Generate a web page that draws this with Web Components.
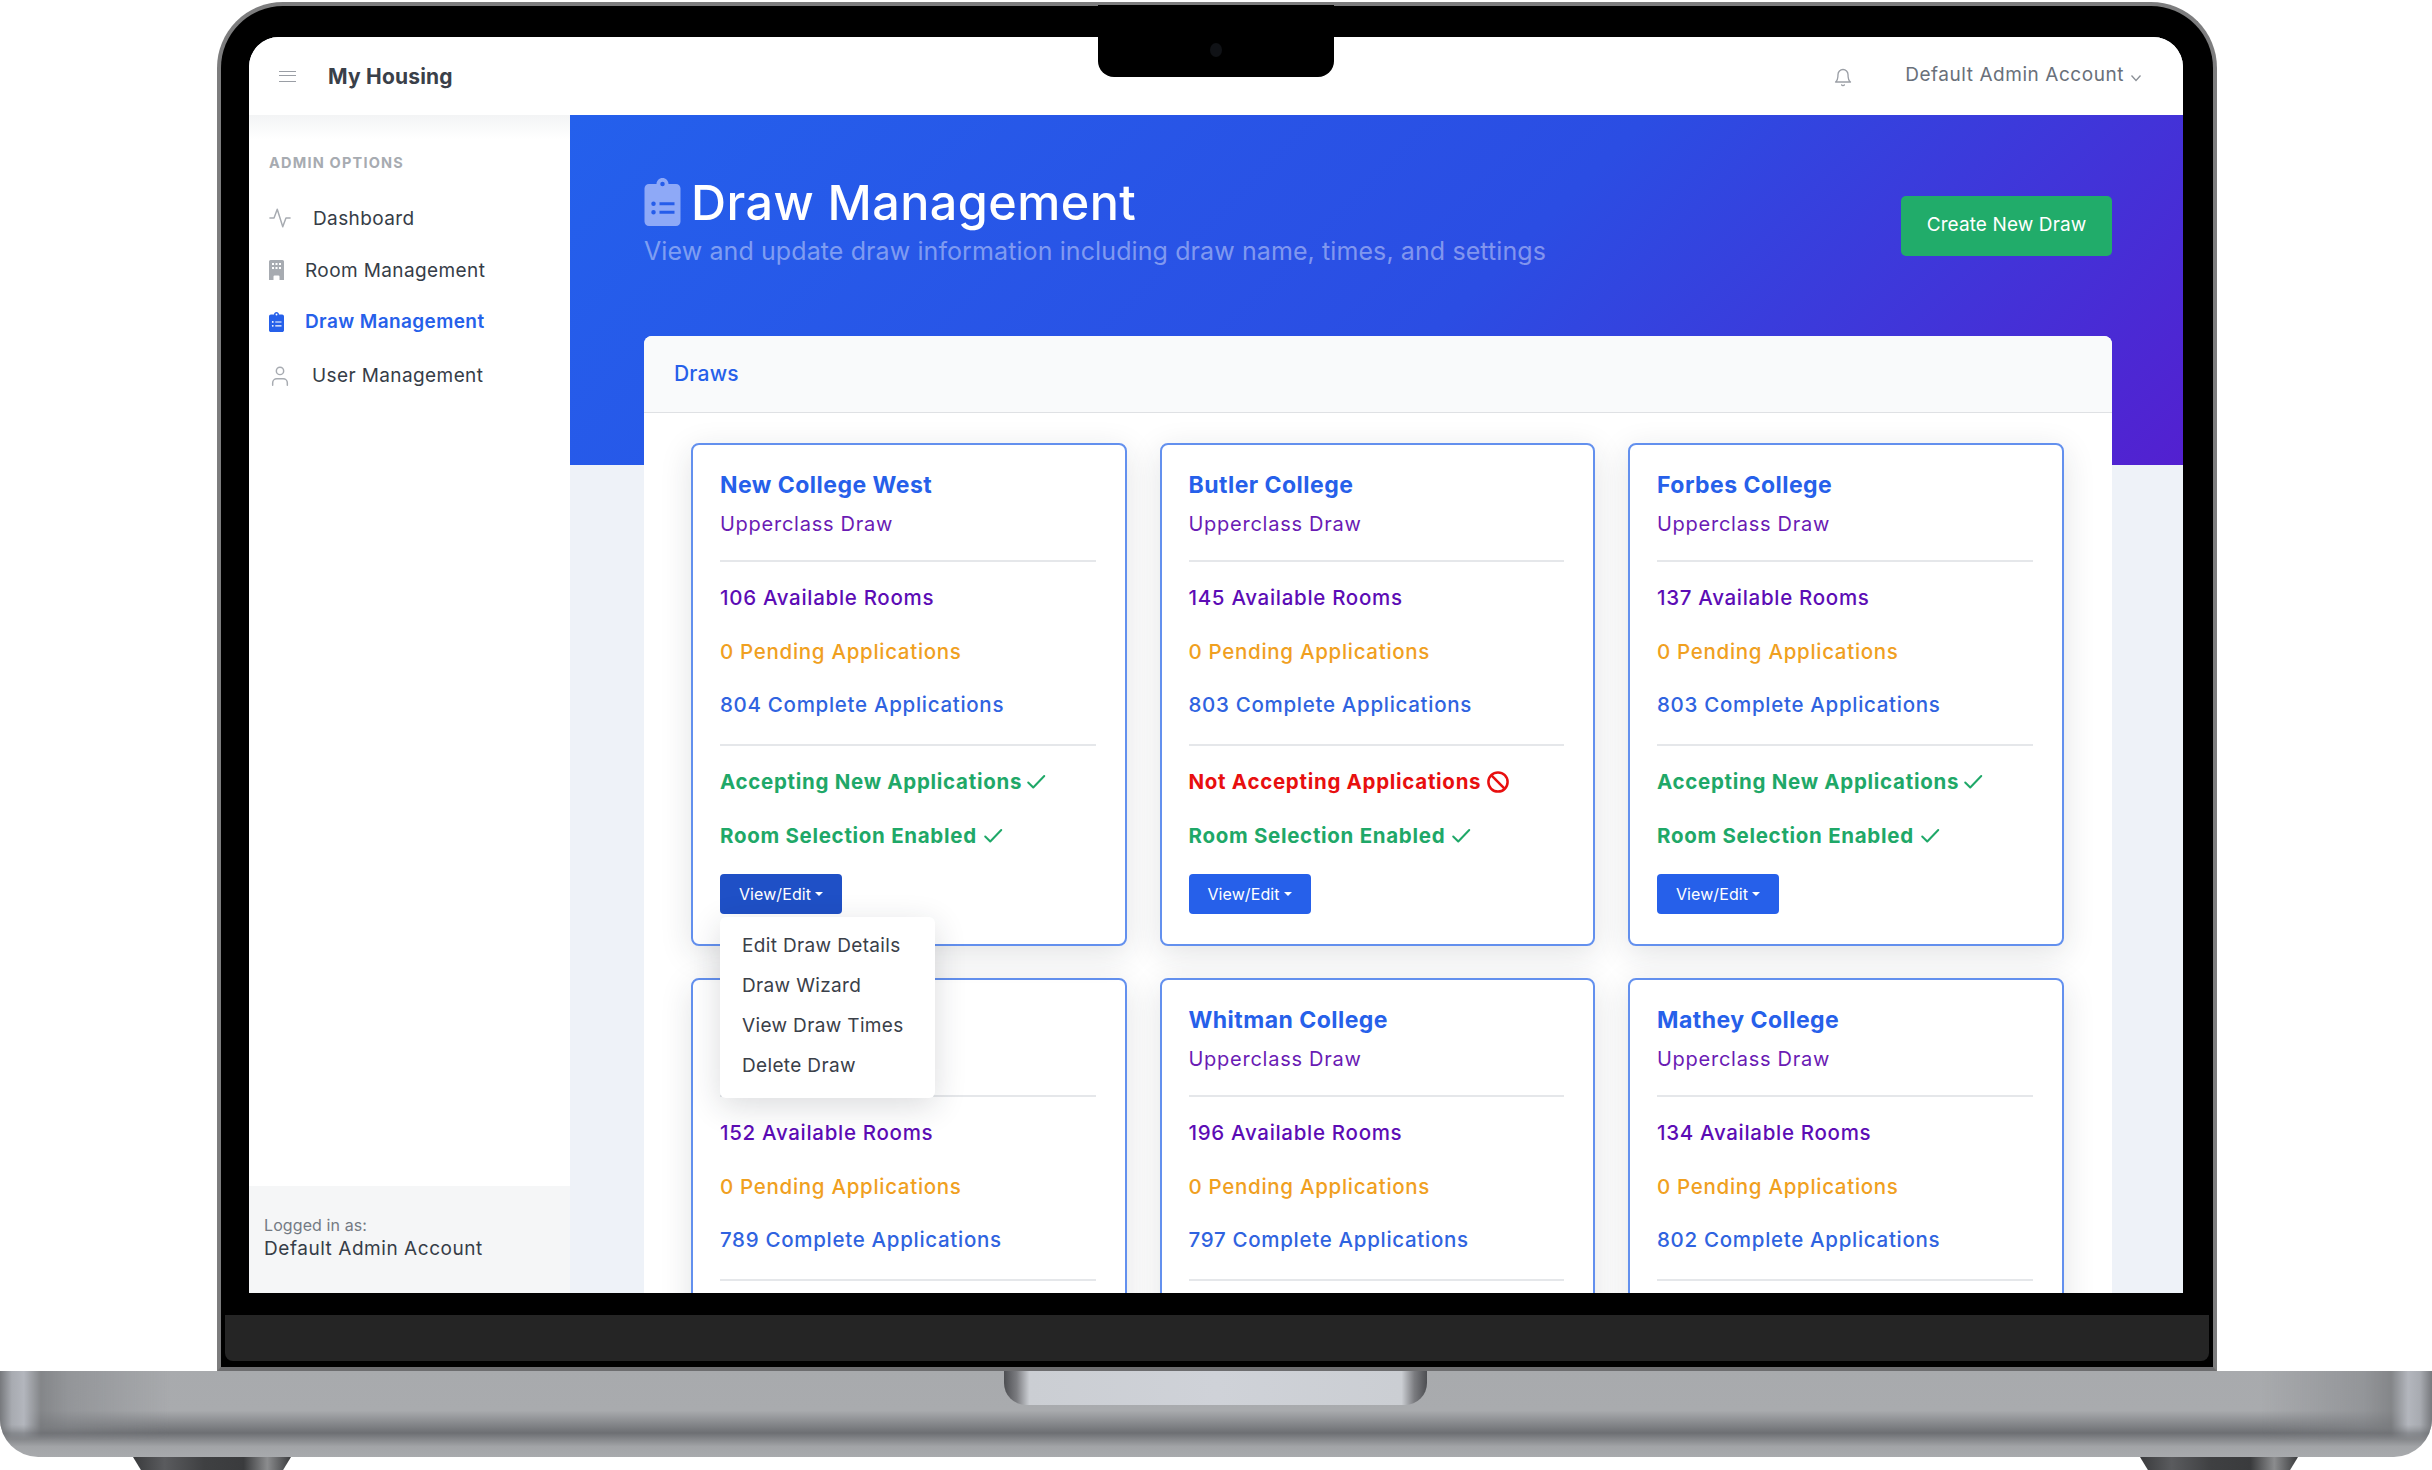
<!DOCTYPE html>
<html>
<head>
<meta charset="utf-8">
<title>My Housing</title>
<style>
html,body{margin:0;padding:0;background:#fff;}
body{width:2432px;height:1470px;overflow:hidden;font-family:Inter,"Liberation Sans",sans-serif;}
</style>
</head>
<body>
<laptop-frame>
  <housing-app>
    <side-nav slot="side">
      <nav-item icon="activity" gap="22" style="height:52px">Dashboard</nav-item>
      <nav-item icon="building" gap="21" style="height:52px">Room Management</nav-item>
      <nav-item icon="clipboard" gap="21" active style="height:51px">Draw Management</nav-item>
      <nav-item icon="user" gap="21" style="height:57px">User Management</nav-item>
    </side-nav>
    <draws-panel slot="main">
      <draw-card raised name="New College West" type="Upperclass Draw" rooms="106" pending="0" complete="804" accepting="yes" pressed>
        <draw-menu slot="menu">
          <span>Edit Draw Details</span><span>Draw Wizard</span><span>View Draw Times</span><span>Delete Draw</span>
        </draw-menu>
      </draw-card>
      <draw-card name="Butler College" type="Upperclass Draw" rooms="145" pending="0" complete="803" accepting="no"></draw-card>
      <draw-card name="Forbes College" type="Upperclass Draw" rooms="137" pending="0" complete="803" accepting="yes"></draw-card>
      <draw-card rooms="152" pending="0" complete="789"></draw-card>
      <draw-card name="Whitman College" type="Upperclass Draw" rooms="196" pending="0" complete="797"></draw-card>
      <draw-card name="Mathey College" type="Upperclass Draw" rooms="134" pending="0" complete="802"></draw-card>
    </draws-panel>
  </housing-app>
</laptop-frame>

<script>
// shared icon paths
const ICONS = {
  activity: '<svg width="22" height="22" viewBox="0 0 24 24" fill="none" stroke="#a7abb1" stroke-width="1.6" stroke-linecap="round" stroke-linejoin="round"><polyline points="23 12 18.5 12 15 21.5 9 2.5 5.5 12 1 12"/></svg>',
  building: '<svg width="15" height="20" viewBox="0 0 15 20" fill="#a7abb1" fill-rule="evenodd"><path d="M1.5 0h12A1.5 1.5 0 0 1 15 1.500V20h-4.500v-3.500a1 1 0 0 0-1-1h-4a1 1 0 0 0-1 1V20H0V1.500A1.500 1.500 0 0 1 1.500 0zM3 3v2h2V3zM6.500 3v2h2V3zM10 3v2h2V3zM3 7v2h2V7zM6.500 7v2h2V7zM10 7v2h2V7z"/></svg>',
  clipboard: '<svg width="15" height="20" viewBox="0 0 384 512" fill="#2660ea" fill-rule="evenodd"><path d="M336 64h-80c0-35.300-28.700-64-64-64s-64 28.700-64 64H48C21.500 64 0 85.500 0 112v352c0 26.500 21.500 48 48 48h288c26.500 0 48-21.500 48-48V112c0-26.500-21.500-48-48-48zM192 40a24 24 0 1 1 0 48a24 24 0 1 1 0-48zM96 230a24 24 0 1 1 0 48a24 24 0 1 1 0-48zM96 330a24 24 0 1 1 0 48a24 24 0 1 1 0-48zM160 240h160v30H160zM160 340h160v30H160z"/></svg>',
  user: '<svg width="22" height="22" viewBox="0 0 24 24" fill="none" stroke="#a7abb1" stroke-width="1.6" stroke-linecap="round" stroke-linejoin="round"><path d="M20 22v-2.500a4.500 4.500 0 0 0-4.500-4.500h-7A4.500 4.500 0 0 0 4 19.500V22"/><circle cx="12" cy="6.500" r="4"/></svg>',
  check: '<svg width="22" height="22" viewBox="0 0 24 24" fill="none" stroke="currentColor" stroke-width="2.200" stroke-linecap="round" stroke-linejoin="round"><polyline points="21 5.500 9 18 3.500 12.500"/></svg>',
  ban: '<svg width="24" height="24" viewBox="0 0 22 22" fill="none" stroke="currentColor" stroke-width="2.300" style="margin-left:2px"><circle cx="11" cy="11" r="8.800"/><line x1="4.800" y1="4.800" x2="17.200" y2="17.200"/></svg>'
};

class LaptopFrame extends HTMLElement{
  constructor(){
    super();
    this.attachShadow({mode:'open'}).innerHTML=`
    <style>
      :host{display:block;width:2432px;height:1470px;}
      .lid{position:relative;box-sizing:border-box;width:2000px;height:1369px;margin:2px 0 0 217px;background:#000;
        border:4px solid #7d7d7e;border-bottom-color:#6d6d6f;border-radius:66px 66px 0 0;padding:31px 30px 0 28px;}
      .screen{height:1256px;border-radius:30px 30px 0 0;overflow:hidden;background:#eef2f8;}
      .notch{position:absolute;left:877px;top:-1px;width:236px;height:72px;background:#000;border-radius:0 0 16px 16px;}
      .cam{position:absolute;left:112px;top:38px;width:12px;height:14px;border-radius:50%;background:#101216;}
      .chin{height:46px;margin:22px -26px 0 -24px;background:#252525;border-radius:0 0 8px 8px;}
      .base{position:relative;height:86px;border-radius:0 0 38px 38px;overflow:hidden;
        background:linear-gradient(#a8aaad 0,#a9abae 46%,#6d6f73 72%,#a2a4a7 88%,#a8aaad 100%);}
      .end{position:absolute;top:0;bottom:0;width:170px;
        -webkit-mask-image:linear-gradient(#000 62%,transparent 80%);mask-image:linear-gradient(#000 62%,transparent 80%);}
      .end.l{left:0;background:linear-gradient(90deg,#77797d 0,#a8abb1 7%,#b3b6bd 14%,rgba(120,122,125,.75) 24%,rgba(130,132,136,.55) 40%,rgba(168,170,173,0) 100%);}
      .end.r{right:0;background:linear-gradient(270deg,#77797d 0,#a8abb1 7%,#b3b6bd 14%,rgba(120,122,125,.75) 24%,rgba(130,132,136,.55) 40%,rgba(168,170,173,0) 100%);}
      .hinge{position:absolute;left:1004px;top:0;width:423px;height:34px;border-radius:0 0 22px 22px;
        background:linear-gradient(90deg,#4d4e52 0,#7b7c80 3%,#cbced3 6%,#cfd2d8 50%,#cbced3 94%,#7b7c80 97%,#4d4e52 100%);}
      .feet{display:flex;justify-content:space-between;height:13px;padding:0 134px 0 133px;}
      .foot{width:158px;height:13px;clip-path:polygon(0 0,100% 0,95% 100%,5% 100%);
        background:linear-gradient(90deg,#3a3b3d,#5a5b5e 20%,#3f4042 45%,#3a3b3d 70%,#8b8c8e 85%,#3a3b3d);}
    </style>
    <div class="lid">
      <div class="screen"><slot></slot></div>
      <div class="notch"><div class="cam"></div></div>
      <div class="chin"></div>
    </div>
    <div class="base"><div class="end l"></div><div class="end r"></div><div class="hinge"></div></div>
    <div class="feet"><div class="foot"></div><div class="foot"></div></div>`;
  }
}

class HousingApp extends HTMLElement{
  constructor(){
    super();
    this.attachShadow({mode:'open'}).innerHTML=`
    <style>
      :host{display:block;height:1256px;color:#363d47;}
      header{display:flex;align-items:center;height:78px;background:#fff;padding:0 41px 0 30px;box-sizing:border-box;}
      .burger{display:block;width:17px;height:11px;margin-top:1px;border-top:1.5px solid #9a9ea5;border-bottom:1.5px solid #9a9ea5;position:relative;box-sizing:border-box;}
      .burger::after{content:"";position:absolute;left:0;right:0;top:3.200px;border-top:1.5px solid #9a9ea5;}
      .brand{margin-left:32px;font-size:21px;font-weight:700;letter-spacing:.2px;color:#3a4049;}
      .user{margin-left:auto;display:flex;align-items:center;color:#69707a;font-size:19px;letter-spacing:.55px;padding-bottom:3px;}
      .bell{margin-right:52px;margin-top:5px;display:block;}
      .chev{margin-left:6px;margin-top:6px;display:block;}
      .body{display:grid;grid-template-columns:321px 1fr;height:1178px;}
      .main{overflow:hidden;}
      .hero{display:flex;height:350px;box-sizing:border-box;padding:57px 71px 0 74px;background:linear-gradient(135deg,#2460ec 0%,#2b4de3 55%,#5320d0 100%);}
      .titles{flex:1;}
      .title{display:flex;align-items:center;gap:10px;height:60px;color:#fff;font-size:48.500px;letter-spacing:.45px;font-weight:500;}
      .sub{height:36px;line-height:36px;font-size:25px;letter-spacing:.1px;color:rgba(255,255,255,.42);margin-top:1px;}
      .create{box-sizing:border-box;width:211px;height:60px;margin-top:24px;line-height:58px;text-align:center;background:#21ac6a;color:#fff;border-radius:5px;font-size:19px;letter-spacing:.1px;}
      .content{margin:-129px 71px 0 74px;}
    </style>
    <header>
      <span class="burger"></span>
      <span class="brand">My Housing</span>
      <span class="user">
        <svg class="bell" width="20" height="22" viewBox="0 0 24 24" fill="none" stroke="#9a9ea5" stroke-width="1.600" stroke-linecap="round" stroke-linejoin="round"><path d="M18 9A6 6 0 0 0 6 9c0 7-3 9-3 9h18s-3-2-3-9"/><path d="M13.700 21.500a2 2 0 0 1-3.400 0"/></svg>
        Default Admin Account
        <svg class="chev" width="12" height="10" viewBox="0 0 12 10" fill="none" stroke="#8a8f96" stroke-width="1.300"><polyline points="1.500 2.500 6 7.500 10.500 2.500"/></svg>
      </span>
    </header>
    <div class="body">
      <slot name="side"></slot>
      <div class="main">
        <div class="hero">
          <div class="titles">
            <div class="title">
              <svg width="37" height="48" viewBox="0 0 384 512" fill="#8ea9f7" fill-rule="evenodd"><path d="M336 64h-80c0-35.300-28.700-64-64-64s-64 28.700-64 64H48C21.500 64 0 85.500 0 112v352c0 26.500 21.500 48 48 48h288c26.500 0 48-21.500 48-48V112c0-26.500-21.500-48-48-48zM192 40a24 24 0 1 1 0 48a24 24 0 1 1 0-48zM96 250a24 24 0 1 1 0 48a24 24 0 1 1 0-48zM96 340a24 24 0 1 1 0 48a24 24 0 1 1 0-48zM160 258h160v32H160zM160 348h160v32H160z"/></svg>
              <span>Draw Management</span>
            </div>
            <div class="sub">View and update draw information including draw name, times, and settings</div>
          </div>
          <div class="create">Create New Draw</div>
        </div>
        <div class="content"><slot name="main"></slot></div>
      </div>
    </div>`;
  }
}

class SideNav extends HTMLElement{
  constructor(){
    super();
    this.attachShadow({mode:'open'}).innerHTML=`
    <style>
      :host{display:flex;flex-direction:column;height:1178px;background:linear-gradient(#f3f4f5 0,#fff 24px);}
      h6{margin:0;padding:38px 0 0 20px;height:39px;line-height:20px;font-size:14.500px;font-weight:700;letter-spacing:1.2px;color:#a7abb1;}
      .items{padding:0 0 0 20px;}
      .foot{margin-top:auto;height:107px;box-sizing:border-box;padding:27px 15px 0;background:#f5f6f7;}
      .who{font-size:16px;letter-spacing:.1px;line-height:24px;color:#747a83;}
      .name{font-size:19px;letter-spacing:.55px;line-height:24px;color:#363d47;}
    </style>
    <h6>ADMIN OPTIONS</h6>
    <div class="items"><slot></slot></div>
    <div class="foot">
      <div class="who">Logged in as:</div>
      <div class="name">Default Admin Account</div>
    </div>`;
  }
}

class NavItem extends HTMLElement{
  constructor(){
    super();
    this.attachShadow({mode:'open'}).innerHTML=`
    <style>
      :host{display:flex;align-items:center;font-size:19px;letter-spacing:.4px;color:#363d47;}
      :host([active]){color:#2660ea;font-weight:600;}
      .ic{display:flex;}
    </style>
    <span class="ic"></span><slot></slot>`;
  }
  connectedCallback(){
    const ic=this.shadowRoot.querySelector('.ic');
    ic.innerHTML=ICONS[this.getAttribute('icon')];
    ic.style.marginRight=this.getAttribute('gap')+'px';
  }
}

class DrawsPanel extends HTMLElement{
  constructor(){
    super();
    this.attachShadow({mode:'open'}).innerHTML=`
    <style>
      :host{display:block;background:#fff;border-radius:8px 8px 0 0;}
      .head{height:77px;box-sizing:border-box;padding:0 30px;line-height:76px;background:#f9fafb;border-bottom:1px solid #dfe1e4;border-radius:8px 8px 0 0;color:#2660ea;font-size:21px;letter-spacing:.2px;font-weight:500;}
      .grid{display:grid;grid-template-columns:repeat(3,435.500px);column-gap:33px;row-gap:32px;padding:29.500px 46px 0 47px;}
    </style>
    <div class="head">Draws</div>
    <div class="grid"><slot></slot></div>`;
  }
}

class DrawCard extends HTMLElement{
  constructor(){
    super();
    this.attachShadow({mode:'open'});
  }
  connectedCallback(){
    const a=n=>this.getAttribute(n);
    let lower='';
    if(a('accepting')){
      const on=a('accepting')=='yes';
      lower=`
      <hr class="h2">
      <div class="row bold first ${on?'green':'red'}">${on?'Accepting New Applications':'Not Accepting Applications'} ${on?ICONS.check:ICONS.ban}</div>
      <div class="row bold green next">Room Selection Enabled ${ICONS.check}</div>
      <div class="btn ${this.hasAttribute('pressed')?'pressed':''}">View/Edit<i></i></div>`;
    }else{
      lower='<hr class="h2">';
    }
    this.shadowRoot.innerHTML=`
    <style>
      :host{display:block;position:relative;box-sizing:border-box;height:503px;border:2px solid #6390ee;border-radius:8px;background:#fff;
        padding:25.500px 29px 0 27px;box-shadow:0 8px 32px rgba(33,40,50,.13);}
      :host([raised]){z-index:3;}
      .row{display:flex;align-items:center;gap:3px;height:30px;line-height:30px;font-size:20.500px;letter-spacing:.7px;white-space:nowrap;}
      .name{font-size:23px;font-weight:700;letter-spacing:.47px;color:#2660ea;}
      .type{margin-top:9px;color:#6a1bb4;font-size:20px;letter-spacing:.74px;}
      hr{border:0;height:2px;background:#e5e7ea;margin:21px 0 0;}
      .rooms{margin-top:20.500px;color:#5c0cb5;font-weight:500;}
      .pending{margin-top:24px;color:#f0a01f;font-weight:500;}
      .complete{margin-top:23.500px;color:#2f63e0;font-weight:500;}
      .h2{margin-top:23.500px;}
      .first{margin-top:21px;}
      .next{margin-top:24px;gap:5px;}
      .bold{font-weight:700;}
      .green{color:#1fa868;}
      .red{color:#e80f0f;}
      .btn{display:flex;align-items:center;justify-content:center;gap:4px;box-sizing:border-box;width:122px;height:40px;margin-top:23px;background:#2660ea;color:#fff;border-radius:4px;font-size:16px;letter-spacing:.1px;}
      .btn.pressed{background:#1f50c6;}
      .btn i{border:4px solid transparent;border-top-color:#fff;border-bottom:0;margin-top:1px;}
    </style>
    <div class="row name">${a('name')||''}</div>
    <div class="row type">${a('type')||''}</div>
    <hr>
    <div class="row rooms">${a('rooms')} Available Rooms</div>
    <div class="row pending">${a('pending')} Pending Applications</div>
    <div class="row complete">${a('complete')} Complete Applications</div>
    ${lower}
    <slot name="menu"></slot>`;
  }
}

class DrawMenu extends HTMLElement{
  constructor(){
    super();
    this.attachShadow({mode:'open'}).innerHTML=`
    <style>
      :host{position:absolute;left:27px;top:472.500px;z-index:5;display:block;box-sizing:border-box;width:215px;height:181px;padding:9px 0 0 22px;
        background:#fff;border-radius:6px;box-shadow:0 8px 32px rgba(33,40,50,.16);}
      ::slotted(span){display:block;height:40px;line-height:40px;font-size:19px;letter-spacing:.35px;color:#3a4049;}
    </style>
    <slot></slot>`;
  }
}

customElements.define('laptop-frame',LaptopFrame);
customElements.define('housing-app',HousingApp);
customElements.define('side-nav',SideNav);
customElements.define('nav-item',NavItem);
customElements.define('draws-panel',DrawsPanel);
customElements.define('draw-card',DrawCard);
customElements.define('draw-menu',DrawMenu);
</script>
</body>
</html>
